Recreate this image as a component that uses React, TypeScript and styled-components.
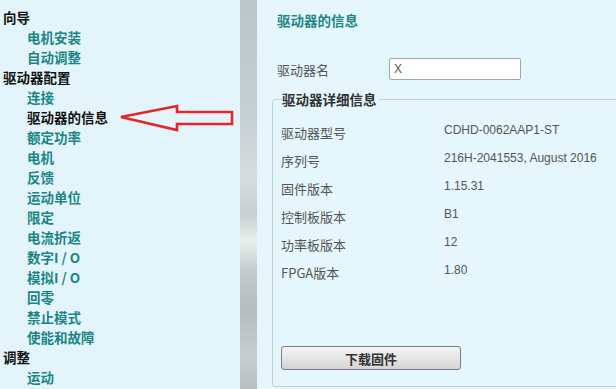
import React from 'react';
import styled, { createGlobalStyle } from 'styled-components';

const GlobalStyle = createGlobalStyle`
  html, body {
    margin: 0;
    padding: 0;
    overflow: hidden;
  }
  body {
    font-family: "Liberation Sans", "Noto Sans CJK SC", sans-serif;
  }
`

const Page = styled.div`
  display: flex;
  width: 616px;
  height: 389px;
  overflow: hidden;
  background: #e4f6fc;
`

const Sidebar = styled.nav`
  position: relative;
  width: 240px;
  flex-shrink: 0;
  padding-top: 7px;
  box-sizing: border-box;
  background: #e3f5fb;
`

const MenuItem = styled.div<{ $sub?: boolean; $active?: boolean }>`
  height: 20px;
  line-height: 20px;
  padding-left: ${p => (p.$sub ? '27px' : '3px')};
  font-family: "Noto Sans CJK SC", sans-serif;
  font-size: 13.5px;
  font-weight: 700;
  color: ${p => (p.$sub && !p.$active ? '#1b8585' : '#111')};
  white-space: nowrap;
`

const Arrow = styled.svg`
  position: absolute;
  left: 118px;
  top: 102px;
`

const Divider = styled.div`
  width: 17px;
  flex-shrink: 0;
  background: linear-gradient(
    to bottom,
    #b9c6ca 0%,
    #c6d0d3 30%,
    #d8dcdc 45%,
    #c9cfd0 55%,
    #eceeee 62%,
    #c4c9ca 70%,
    #b6bdbf 80%,
    #c9cfd1 92%,
    #b7bec0 100%
  );
`

const Content = styled.main`
  flex: 1;
  padding: 11px 0 0 20px;
  box-sizing: border-box;
  background: #e5f6fc;
  color: #555;
`

const Title = styled.h2`
  margin: 0;
  font-family: "Noto Sans CJK SC", sans-serif;
  font-size: 13.5px;
  font-weight: 700;
  color: #1e8585;
  line-height: 18px;
`

const NameRow = styled.div`
  display: flex;
  align-items: center;
  margin-top: 29px;
  height: 22px;
`

const FieldLabel = styled.span`
  width: 112px;
  font-family: "Noto Sans CJK SC", sans-serif;
  font-size: 13px;
  color: #555;
`

const TextInput = styled.input`
  width: 132px;
  height: 22px;
  box-sizing: border-box;
  border: 1px solid #9aa8b0;
  border-radius: 2px;
  padding: 0 4px;
  font-family: "Liberation Sans", sans-serif;
  font-size: 12px;
  color: #555;
  background: #fff;
`

const Details = styled.fieldset`
  margin: 9px -40px 0 -5px;
  padding: 9px 0 0 8px;
  height: 298px;
  box-sizing: border-box;
  border: 1px solid #c3d2d9;
  border-radius: 3px;
`

const Legend = styled.legend`
  padding: 0 2px 0 1px;
  margin-left: 0;
  font-family: "Noto Sans CJK SC", sans-serif;
  font-size: 13.5px;
  font-weight: 700;
  color: #333;
`

const InfoGrid = styled.div`
  display: grid;
  grid-template-columns: 163px auto;
  grid-auto-rows: 28px;
  align-items: center;
`

const InfoLabel = styled.span`
  font-family: "Noto Sans CJK SC", sans-serif;
  font-size: 13px;
  color: #555;
`

const InfoValue = styled.span`
  font-family: "Liberation Sans", sans-serif;
  font-size: 12px;
  color: #555;
  position: relative;
  top: -2px;
`

const Button = styled.button`
  display: block;
  margin-top: 60px;
  width: 180px;
  height: 24px;
  border: 1px solid #7d7d7d;
  border-radius: 3px;
  background: linear-gradient(to bottom, #f4f4f4 0%, #e6e6e6 50%, #d4d4d4 100%);
  font-family: "Noto Sans CJK SC", sans-serif;
  font-size: 13px;
  font-weight: 700;
  color: #333;
  padding: 0;
`

const menu: { text: string; sub?: boolean; active?: boolean }[] = [
  { text: '向导' },
  { text: '电机安装', sub: true },
  { text: '自动调整', sub: true },
  { text: '驱动器配置' },
  { text: '连接', sub: true },
  { text: '驱动器的信息', sub: true, active: true },
  { text: '额定功率', sub: true },
  { text: '电机', sub: true },
  { text: '反馈', sub: true },
  { text: '运动单位', sub: true },
  { text: '限定', sub: true },
  { text: '电流折返', sub: true },
  { text: '数字I / O', sub: true },
  { text: '模拟I / O', sub: true },
  { text: '回零', sub: true },
  { text: '禁止模式', sub: true },
  { text: '使能和故障', sub: true },
  { text: '调整' },
  { text: '运动', sub: true },
];

const info: [string, string][] = [
  ['驱动器型号', 'CDHD-0062AAP1-ST'],
  ['序列号', '216H-2041553, August 2016'],
  ['固件版本', '1.15.31'],
  ['控制板版本', 'B1'],
  ['功率板版本', '12'],
  ['FPGA版本', '1.80'],
];

const App = () => {
  return (
    <>
      <GlobalStyle />
      <Page>
        <Sidebar>
          {menu.map(item => (
            <MenuItem key={item.text} $sub={item.sub} $active={item.active}>
              {item.text}
            </MenuItem>
          ))}
          <Arrow width="118" height="32" viewBox="0 0 118 32">
            <path
              d="M3 15 L59 4 L59 10 L114 10 L114 22 L59 22 L59 28 Z"
              fill="none"
              stroke="#e3262b"
              strokeWidth="2.6"
              strokeLinejoin="miter"
            />
          </Arrow>
        </Sidebar>
        <Divider />
        <Content>
          <Title>驱动器的信息</Title>
          <NameRow>
            <FieldLabel>驱动器名</FieldLabel>
            <TextInput defaultValue="X" />
          </NameRow>
          <Details>
            <Legend>驱动器详细信息</Legend>
            <InfoGrid>
              {info.map(([label, value]) => (
                <React.Fragment key={label}>
                  <InfoLabel>{label}</InfoLabel>
                  <InfoValue>{value}</InfoValue>
                </React.Fragment>
              ))}
            </InfoGrid>
            <Button>下载固件</Button>
          </Details>
        </Content>
      </Page>
    </>
  );
};

export default App;
